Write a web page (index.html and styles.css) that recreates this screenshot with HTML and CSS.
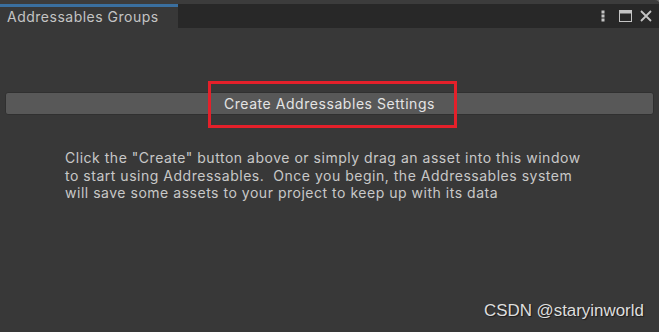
FILE: index.html
```html
<!DOCTYPE html>
<html>
<head>
<meta charset="utf-8">
<link rel="stylesheet" href="styles.css">
</head>
<body>
<div class="window">
  <div class="topstrip"></div>
  <div class="tabbar">
    <div class="tab">Addressables Groups</div>
    <div class="tools">
      <svg class="ico" width="6" height="12" viewBox="0 0 6 12"><rect x="1.5" y="0.5" width="3" height="3" fill="#c4c4c4"/><rect x="1.5" y="4.5" width="3" height="3" fill="#c4c4c4"/><rect x="1.5" y="8.5" width="3" height="3" fill="#c4c4c4"/></svg>
      <svg class="ico" width="13" height="12" viewBox="0 0 13 12"><rect x="0.5" y="0.5" width="12" height="11" fill="none" stroke="#c4c4c4"/><rect x="0.5" y="0.5" width="12" height="3" fill="#c4c4c4"/></svg>
      <svg class="ico" width="12" height="12" viewBox="0 0 12 12"><path d="M1 1 L11 11 M11 1 L1 11" stroke="#c4c4c4" stroke-width="1.8"/></svg>
    </div>
  </div>
  <div class="content">
    <div class="btnwrap">
      <button class="btn">Create Addressables Settings</button>
      <div class="highlight"></div>
    </div>
    <p class="info">Click the "Create" button above or simply drag an asset into this window<br>to start using Addressables.&nbsp; Once you begin, the Addressables system<br>will save some assets to your project to keep up with its data</p>
  </div>
  <div class="watermark">CSDN @staryinworld</div>
</div>
</body>
</html>
```
FILE: styles.css
```css
html, body {
  margin: 0;
  padding: 0;
  background: #383838;
  width: 659px;
  height: 332px;
  overflow: hidden;
}
.window {
  position: relative;
  width: 659px;
  height: 332px;
  display: flex;
  flex-direction: column;
  font-family: Inter, "Noto Sans", sans-serif;
  background: #383838;
}
.topstrip {
  height: 4px;
  background: #3c3c3c;
  border-top-right-radius: 6px;
  box-shadow: 6px -2px 0 #6a6a6a;
}
.tabbar {
  height: 24px;
  background: #282828;
  display: flex;
  align-items: stretch;
}
.tab {
  width: 171px;
  background: #383838;
  border-top: 3px solid #3a6f9f;
  color: #c4c4c4;
  font-size: 14px;
  letter-spacing: 0.5px;
  padding-left: 7px;
  line-height: 19px;
}
.tools {
  margin-left: auto;
  display: flex;
  align-items: center;
  padding-right: 7px;
}
.ico { display: block; }
.ico:nth-child(1) { margin-right: 13px; }
.ico:nth-child(2) { margin-right: 8px; }
.content {
  display: flex;
  flex-direction: column;
}
.btnwrap {
  position: relative;
  margin: 64px 5px 0 5px;
}
.btn {
  display: block;
  width: 100%;
  height: 23px;
  box-sizing: border-box;
  background: #585858;
  border: 1px solid #303030;
  border-radius: 3px;
  color: #e4e4e4;
  font-family: Inter, "Noto Sans", sans-serif;
  font-size: 14px;
  letter-spacing: 0.55px;
  padding: 0;
  line-height: 20px;
  text-align: center;
}
.highlight {
  position: absolute;
  left: 203px;
  top: -11px;
  width: 243px;
  height: 41px;
  border: 3px solid #e4202a;
}
.info {
  margin: 34px 0 0 65px;
  color: #c8c8c8;
  font-size: 14px;
  letter-spacing: 0.52px;
  line-height: 17.5px;
}
.watermark {
  position: absolute;
  left: 484px;
  top: 301px;
  font-family: "Liberation Sans", Arial, sans-serif;
  font-size: 16.9px;
  color: #dedede;
  text-shadow: 1px 1px 1px rgba(0,0,0,0.5);
}
```
